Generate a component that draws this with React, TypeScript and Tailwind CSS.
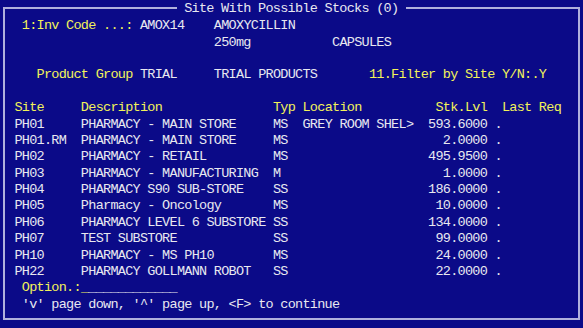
import React from "react";

type Seg = [number, string, "y" | "w"];

const W = "text-[#e8e8f0]";
const Y = "text-[#f2f25a]";

function Line({ segs }: { segs: Seg[] }) {
  // columns counted from screen column 1 (col 0 is the frame)
  let cur = 1;
  const out: React.ReactNode[] = [];
  segs.forEach(([col, text, c], i) => {
    const pad = col > cur ? " ".repeat(col - cur) : "";
    out.push(
      <span key={i} className={c === "y" ? Y : W}>
        {pad + text}
      </span>
    );
    cur = Math.max(cur, col) + text.length;
  });
  return <div className="h-[16.4px] leading-[16.4px] whitespace-pre">{out.length ? out : " "}</div>;
}

const rows: [string, string, string, string, string][] = [
  ["PH01", "PHARMACY - MAIN STORE", "MS", "GREY ROOM SHEL>", "593.6000"],
  ["PH01.RM", "PHARMACY - MAIN STORE", "MS", "", "2.0000"],
  ["PH02", "PHARMACY - RETAIL", "MS", "", "495.9500"],
  ["PH03", "PHARMACY - MANUFACTURING", "M", "", "1.0000"],
  ["PH04", "PHARMACY S90 SUB-STORE", "SS", "", "186.0000"],
  ["PH05", "Pharmacy - Oncology", "MS", "", "10.0000"],
  ["PH06", "PHARMACY LEVEL 6 SUBSTORE", "SS", "", "134.0000"],
  ["PH07", "TEST SUBSTORE", "SS", "", "99.0000"],
  ["PH10", "PHARMACY - MS PH10", "MS", "", "24.0000"],
  ["PH22", "PHARMACY GOLLMANN ROBOT", "SS", "", "22.0000"],
];

export default function App() {
  return (
    <div
      className="w-[583px] h-[328px] bg-[#0b0a88] pt-[7px] pl-[3px] overflow-hidden text-[13.5px] tracking-[-0.715px]"
      style={{ fontFamily: '"Liberation Mono", "DejaVu Sans Mono", monospace' }}
    >
      <div className="relative w-[577px] h-[313px] border-2 border-[#b0b0dc] pt-[9.2px] pl-[2px]">
        <div className={`absolute top-[-8px] left-[171.8px] h-[16.4px] leading-[16.4px] whitespace-pre bg-[#0b0a88] ${W}`}>
          {" Site With Possible Stocks (0) "}
        </div>
        <Line segs={[[3, "1:Inv Code ...:", "y"], [19, "AMOX14", "w"], [29, "AMOXYCILLIN", "w"]]} />
        <Line segs={[[29, "250mg", "w"], [45, "CAPSULES", "w"]]} />
        <Line segs={[]} />
        <Line
          segs={[
            [5, "Product Group", "y"],
            [19, "TRIAL", "w"],
            [29, "TRIAL PRODUCTS", "w"],
            [50, "11.Filter by Site Y/N:.Y", "y"],
          ]}
        />
        <Line segs={[]} />
        <Line
          segs={[
            [2, "Site", "y"],
            [11, "Description", "y"],
            [37, "Typ", "y"],
            [41, "Location", "y"],
            [59, "Stk.Lvl", "y"],
            [68, "Last Req", "y"],
          ]}
        />
        {rows.map(([site, desc, typ, loc, val]) => (
          <Line
            key={site}
            segs={[
              [2, site, "w"],
              [11, desc, "w"],
              [37, typ, "w"],
              [41, loc, "w"],
              [66 - val.length, val, "w"],
              [67, ".", "w"],
            ]}
          />
        ))}
        <Line segs={[[3, "Option.:", "y"], [11, "_", "y"], [12, "____________", "w"]]} />
        <Line segs={[[3, "'v' page down, '^' page up, <F> to continue", "w"]]} />
      </div>
    </div>
  );
}
